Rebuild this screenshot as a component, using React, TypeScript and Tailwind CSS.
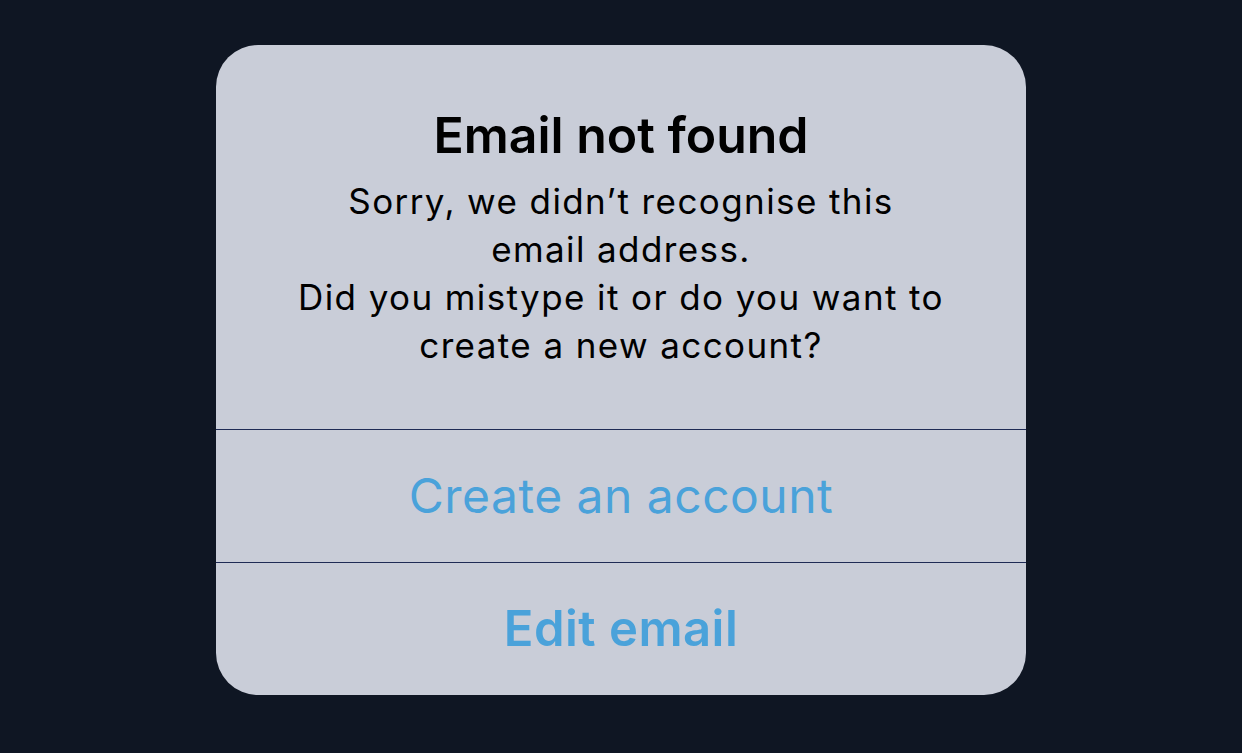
export default function App() {
  return (
    <div
      className="flex h-[753px] w-full justify-center bg-[#0f1623] pt-[45px]"
      style={{ fontFamily: "Inter, 'Noto Sans', sans-serif" }}
    >
      <div className="flex h-[650px] w-[810px] flex-col overflow-hidden rounded-[42px] bg-[#c9cdd8]">
        {/* Message */}
        <div className="flex h-[384px] flex-col items-center pt-[60px] text-center text-black">
          <h1 className="text-[50px] font-semibold leading-[60px]">Email not found</h1>
          <p className="mt-[12px] text-[35px] leading-[48px] tracking-[0.04em]">
            Sorry, we didn’t recognise this
            <br />
            email address.
            <br />
            Did you mistype it or do you want to
            <br />
            create a new account?
          </p>
        </div>

        {/* Actions */}
        <button className="flex h-[133px] items-center justify-center border-t border-[#1f2b55] text-[48px] tracking-[0.01em] text-[#4aa2da]">
          Create an account
        </button>
        <button className="flex h-[133px] items-center justify-center border-t border-[#1f2b55] text-[49px] font-semibold tracking-[0.01em] text-[#4aa2da]">
          Edit email
        </button>
      </div>
    </div>
  );
}
